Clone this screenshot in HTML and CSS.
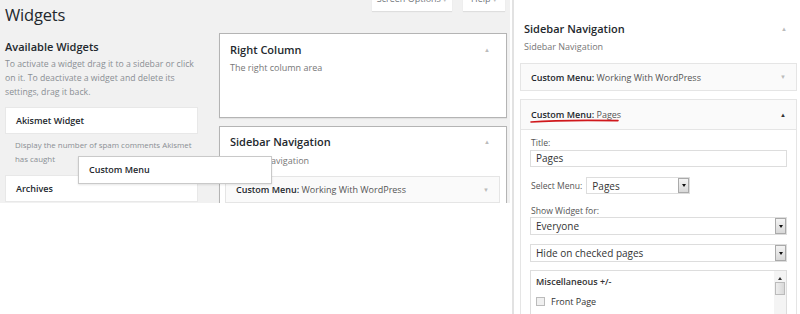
FILE: index.html
```html
<!DOCTYPE html>
<html>
<head>
<meta charset="utf-8">
<link rel="stylesheet" href="styles.css">
</head>
<body>
<div class="left">
  <div class="head">
    <h1>Widgets</h1>
    <div class="tabs">
      <span class="tab tab-so">Screen Options <span class="caret">▾</span></span>
      <span class="tab tab-help">Help <span class="caret">▾</span></span>
    </div>
  </div>
  <div class="cols">
    <div class="avail">
      <h2 class="avail-title">Available Widgets</h2>
      <p class="desc">To activate a widget drag it to a sidebar or click on it. To deactivate a widget and delete its settings, drag it back.</p>
      <div class="wbox">Akismet Widget</div>
      <p class="wdesc">Display the number of spam comments Akismet has caught</p>
      <div class="wbox">Archives</div>
    </div>
    <div class="sidebars">
      <div class="sbox sbox-rc">
        <div class="sbox-head"><h3>Right Column</h3><span class="arr">▲</span></div>
        <p class="sdesc">The right column area</p>
      </div>
      <div class="sbox">
        <div class="sbox-head"><h3>Sidebar Navigation</h3><span class="arr">▲</span></div>
        <p class="sdesc">Sidebar Navigation</p>
        <div class="widget"><span><b>Custom Menu:</b> Working With WordPress</span><span class="arr">▼</span></div>
      </div>
    </div>
  </div>
  <div class="drag">Custom Menu</div>
</div>
<div class="right">
  <div class="rhead"><h3>Sidebar Navigation</h3><span class="arr">▲</span></div>
  <p class="rdesc">Sidebar Navigation</p>
  <div class="rwidget"><span><b>Custom Menu:</b> Working With WordPress</span><span class="arr">▼</span></div>
  <div class="rwidget open">
    <div class="rwidget-top">
      <span class="marked"><b>Custom Menu:</b> Pages
        <svg class="underline" width="90" height="6" viewBox="0 0 90 6"><path d="M1 4 C 20 2.5, 50 2, 88 2.6" stroke="#d0181c" stroke-width="1.6" fill="none" stroke-linecap="round"/></svg>
      </span>
      <span class="arr dark">▲</span>
    </div>
    <div class="rwidget-inside">
      <label class="lbl">Title:</label>
      <div class="input">Pages</div>
      <div class="row">
        <label class="lbl">Select Menu:</label>
        <div class="select small"><span>Pages</span><span class="dd"><span class="tri"></span></span></div>
      </div>
      <label class="lbl lbl-show">Show Widget for:</label>
      <div class="select"><span>Everyone</span><span class="dd"><span class="tri"></span></span></div>
      <div class="select"><span>Hide on checked pages</span><span class="dd"><span class="tri"></span></span></div>
      <div class="list">
        <div class="list-body">
          <div class="list-title">Miscellaneous +/-</div>
          <div class="check"><span class="cb"></span>Front Page</div>
        </div>
        <div class="sbar"><span class="sb-up"></span><span class="sb-thumb"></span></div>
      </div>
    </div>
  </div>
</div>
</body>
</html>
```
FILE: styles.css
```css
* { box-sizing: border-box; }
body {
  margin: 0;
  width: 800px;
  height: 314px;
  overflow: hidden;
  background: #fff;
  font-family: "Open Sans", "Liberation Sans", sans-serif;
  color: #444;
  display: flex;
  align-items: flex-start;
  gap: 2px;
}
p { margin: 0; }
h1, h2, h3 { margin: 0; }

.left {
  width: 510px;
  height: 203px;
  background: #f1f1f1;
  overflow: hidden;
  position: relative;
  padding: 0 5px 0 5px;
}
.head {
  display: flex;
  justify-content: space-between;
  align-items: flex-start;
  height: 33px;
}
h1 {
  font-size: 16.5px;
  font-weight: 400;
  color: #23282d;
  line-height: 22px;
  padding-top: 4px;
  letter-spacing: -0.2px;
}
.tabs { display: flex; gap: 11px; margin-top: -10px; }
.tab {
  background: #fff;
  font-size: 9px;
  color: #72777c;
  height: 21px;
  line-height: 12px;
  padding: 3px 0 0;
  text-align: center;
  white-space: nowrap;
  box-shadow: 0 1px 1px rgba(0,0,0,.08);
}
.tab-so { width: 80px; }
.tab-help { width: 42px; }
.caret { color: #bbb; font-size: 7px; }

.cols { display: flex; gap: 21px; }
.avail { width: 193px; flex: none; }
.avail-title {
  font-size: 11px;
  font-weight: 600;
  color: #23282d;
  line-height: 16px;
  padding-top: 6px;
}
.desc {
  font-size: 8.7px;
  line-height: 14px;
  color: #8a8f94;
  margin-top: 2px;
}
.wbox {
  background: #fff;
  border: 1px solid #e8e8e8;
  height: 27px;
  font-size: 9px;
  font-weight: 600;
  color: #23282d;
  line-height: 25px;
  padding-left: 10px;
}
.avail .wbox:first-of-type { margin-top: 8px; }
.wdesc {
  font-size: 7.9px;
  line-height: 14px;
  color: #8a8f94;
  padding: 4px 0 0 10px;
  height: 41px;
}

.sidebars { width: 288px; flex: none; }
.sbox {
  background: #fff;
  border: 1px solid #b4b4b4;
  box-shadow: 0 1px 1px rgba(0,0,0,.06);
  padding: 0 6px 0 10px;
  margin-bottom: 8px;
}
.sbox-rc { height: 85px; }
.sbox-head {
  display: flex;
  justify-content: space-between;
  align-items: center;
  padding-top: 8px;
  height: 24px;
  padding-right: 10px;
}
.sbox-head h3 { font-size: 11px; font-weight: 600; color: #23282d; line-height: 16px; }
.sbox + .sbox .sbox-head { padding-top: 7px; height: 23px; }
.arr { font-size: 6px; color: #bbb; }
.arr.dark { color: #333; }
.sdesc { font-size: 9px; color: #777; line-height: 14px; margin-top: 3px; }
.sbox + .sbox .sdesc { margin-top: 4px; }
.sbox .widget {
  margin: 8px 0 0 -5px;
  background: #fafafa;
  border: 1px solid #e5e5e5;
  height: 27px;
  display: flex;
  justify-content: space-between;
  align-items: center;
  padding: 0 10px 0 10px;
  font-size: 9px;
  color: #555;
}
.widget b, .rwidget b { font-weight: 600; color: #23282d; }

.drag {
  position: absolute;
  left: 78px;
  top: 156px;
  width: 194px;
  height: 28px;
  background: #fff;
  border: 1px solid #c9c9c9;
  box-shadow: 0 1px 2px rgba(0,0,0,.1);
  font-size: 9px;
  font-weight: 600;
  color: #23282d;
  line-height: 26px;
  padding-left: 10px;
}

.right {
  width: 288px;
  height: 314px;
  flex: none;
  background: #fff;
  border-left: 2px solid #e2e2e2;
  padding: 0 3px 0 6px;
  overflow: hidden;
}
.rhead {
  display: flex;
  justify-content: space-between;
  align-items: center;
  padding: 21px 10px 0 4px;
}
.rhead h3 { font-size: 11px; font-weight: 600; color: #23282d; line-height: 16px; }
.rdesc { font-size: 9px; color: #777; line-height: 14px; padding-left: 4px; margin-top: 3px; }
.rwidget {
  background: #fafafa;
  border: 1px solid #e5e5e5;
  font-size: 9px;
  color: #555;
  margin-top: 8px;
}
.rwidget:not(.open) {
  height: 28px;
  display: flex;
  justify-content: space-between;
  align-items: center;
  padding: 0 10px;
  margin-top: 9px;
}
.rwidget-top {
  height: 30px;
  display: flex;
  justify-content: space-between;
  align-items: center;
  padding: 0 10px;
  border-bottom: 1px solid #e5e5e5;
}
.marked { position: relative; }
.underline { position: absolute; left: -1px; top: 10px; }
.rwidget-inside {
  background: #fff;
  padding: 7px 9px 0 9px;
}
.lbl { display: block; font-size: 8.6px; color: #555; line-height: 12px; padding-left: 1px; white-space: nowrap; }
.input {
  height: 17px;
  border: 1px solid #ddd;
  font-size: 10px;
  color: #333;
  line-height: 15px;
  padding-left: 5px;
  margin-top: 1px;
}
.row { display: flex; align-items: center; gap: 4px; margin-top: 10px; }
.select {
  height: 18px;
  border: 1px solid #ddd;
  display: flex;
  justify-content: space-between;
  align-items: center;
  font-size: 10px;
  color: #333;
  padding-left: 5px;
  margin-bottom: 9px;
}
.select.small { width: 104px; height: 17px; margin-bottom: 0; }
.select.small .dd { height: 15px; }
.dd {
  width: 11px;
  height: 16px;
  border: 1px solid #aaa;
  background: linear-gradient(#f4f4f4, #d8d8d8);
  display: flex;
  align-items: center;
  justify-content: center;
}
.tri {
  width: 0; height: 0;
  border-left: 2.5px solid transparent;
  border-right: 2.5px solid transparent;
  border-top: 3px solid #111;
}
.lbl-show { margin-top: 11px; margin-bottom: 0; }
.list {
  border: 1px solid #ddd;
  height: 60px;
  display: flex;
  margin-top: -1px;
}
.list-body { flex: 1; padding: 4px 5px; }
.list-title { font-size: 9px; font-weight: 600; color: #333; line-height: 14px; }
.check { display: flex; align-items: center; gap: 6px; font-size: 9px; color: #333; margin-top: 6px; }
.cb { width: 9px; height: 9px; border: 1px solid #bbb; background: #f0f0f0; }
.sbar {
  width: 12px;
  background: #f4f4f4;
  display: flex;
  flex-direction: column;
  align-items: center;
  padding-top: 6px;
}
.sb-up {
  width: 0; height: 0;
  border-left: 2px solid transparent;
  border-right: 2px solid transparent;
  border-bottom: 3px solid #333;
}
.sb-thumb {
  width: 10px;
  height: 13px;
  margin-top: 2px;
  border: 1px solid #bbb;
  background: linear-gradient(90deg, #eee, #d9d9d9);
}
```
